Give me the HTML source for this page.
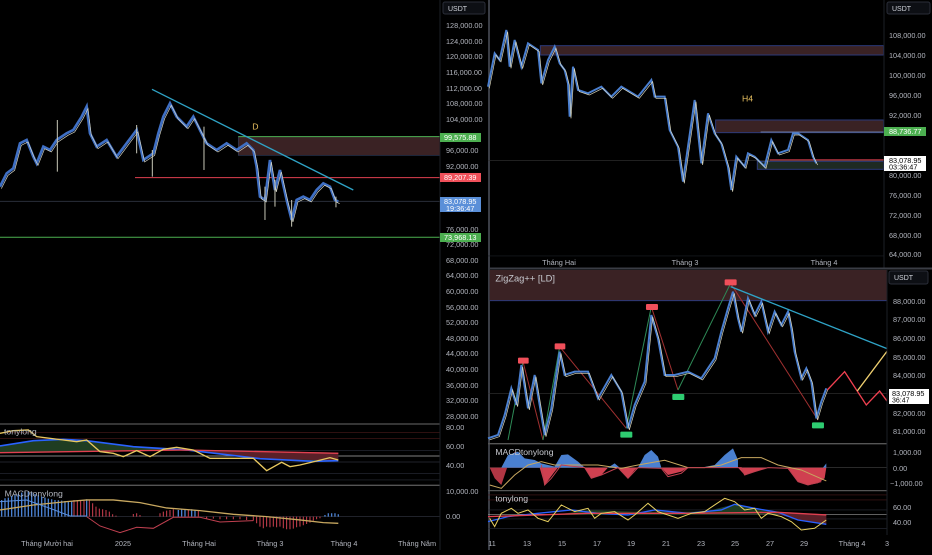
<!DOCTYPE html>
<html><head><meta charset="utf-8"><style>
html,body{margin:0;padding:0;background:#000;}
body{width:932px;height:550px;overflow:hidden;font-family:"Liberation Sans",sans-serif;}
svg text{font-family:"Liberation Sans",sans-serif;}
</style></head><body>
<svg width="932" height="550" viewBox="0 0 932 550" xmlns="http://www.w3.org/2000/svg">
<rect width="932" height="550" fill="#000"/>
<!-- ===== LEFT PANEL ===== -->
<g transform="scale(0.3333)">
 <rect x="715" y="410" width="605" height="56" fill="#3a2224" stroke="#2c3a5a" stroke-width="2"/>
 <line x1="715" y1="410" x2="1320" y2="410" stroke="#4caf50" stroke-width="3"/>
 <line x1="405" y1="533" x2="1320" y2="533" stroke="#e04050" stroke-width="3"/>
 <line x1="0" y1="604" x2="1320" y2="604" stroke="#2a2e39" stroke-width="3"/>
 <line x1="0" y1="712" x2="1320" y2="712" stroke="#4caf50" stroke-width="3"/>
 <line x1="456" y1="268" x2="1060" y2="570" stroke="#2fa3c6" stroke-width="4"/>
 <polyline fill="none" stroke="#3f6fc4" stroke-width="8" points="0,560 20,520 40,505 60,430 80,420 100,470 110,490 130,440 150,450 170,420 200,400 220,390 245,350 260,320 270,400 290,440 320,420 350,470 380,430 410,390 430,480 460,460 475,400 490,350 510,310 530,350 560,380 580,350 600,390 620,430 650,450 680,430 710,450 740,430 760,450 770,500 780,590 795,600 810,480 825,570 840,510 860,600 875,660 890,600 910,590 930,600 950,570 970,550 990,560 1005,600 1015,605"/>
 <polyline fill="none" stroke="#d8d8c8" stroke-width="2" transform="translate(4,6)" points="0,560 20,520 40,505 60,430 80,420 100,470 110,490 130,440 150,450 170,420 200,400 220,390 245,350 260,320 270,400 290,440 320,420 350,470 380,430 410,390 430,480 460,460 475,400 490,350 510,310 530,350 560,380 580,350 600,390 620,430 650,450 680,430 710,450 740,430 760,450 770,500 780,590 795,600 810,480 825,570 840,510 860,600 875,660 890,600 910,590 930,600 950,570 970,550 990,560 1005,600 1015,605"/>
 <g stroke="#c8c8b8" stroke-width="3">
  <line x1="172" y1="360" x2="172" y2="515"/><line x1="410" y1="375" x2="410" y2="460"/><line x1="457" y1="450" x2="457" y2="530"/><line x1="612" y1="380" x2="612" y2="510"/><line x1="795" y1="560" x2="795" y2="660"/><line x1="825" y1="540" x2="825" y2="620"/><line x1="875" y1="600" x2="875" y2="680"/><line x1="1008" y1="590" x2="1008" y2="622"/>
 </g>
 <text x="757" y="388" fill="#e8c060" font-size="26">D</text>
</g>
<g transform="translate(0,270) scale(0.3333)">
 <line x1="0" y1="462" x2="1465" y2="462" stroke="#555" stroke-width="4"/>
 <line x1="0" y1="646" x2="1465" y2="646" stroke="#555" stroke-width="4"/>
 <g stroke="#2a2e39" stroke-width="2"><line x1="0" y1="541" x2="1320" y2="541"/><line x1="0" y1="576" x2="1320" y2="576"/><line x1="0" y1="610" x2="1320" y2="610"/><line x1="0" y1="630" x2="1320" y2="630"/><line x1="0" y1="740" x2="1320" y2="740"/></g>
 <line x1="0" y1="488" x2="1320" y2="488" stroke="#4a1a1a" stroke-width="2"/>
 <line x1="0" y1="506" x2="1320" y2="506" stroke="#4a1a1a" stroke-width="2"/>
 <line x1="0" y1="558" x2="1320" y2="558" stroke="#aaa" stroke-width="2"/>
 <path d="M0,528 L100,512 L190,508 L260,512 L400,530 L560,540 L780,566 L940,574 L1015,572 L1015,548 L560,540 L0,548Z" fill="#1f3d22"/>
 <path d="M560,540 L1015,548 L1015,572 L780,566Z" fill="#5a2028"/>
 <polyline fill="none" stroke="#2962ff" stroke-width="5" points="0,528 100,512 190,508 260,512 400,530 560,540 780,566 940,574 1015,572"/>
 <polyline fill="none" stroke="#e04050" stroke-width="4" points="0,548 560,540 1015,550"/>
 <polyline fill="none" stroke="#e8c860" stroke-width="4" points="0,490 40,482 85,480 110,500 190,510 230,515 260,510 300,545 340,550 370,560 410,542 450,560 490,538 530,532 580,540 630,565 700,565 760,565 800,602 845,577 870,590 900,585 950,573 990,563 1015,570"/>
 <text x="12" y="494" fill="#b2b5be" font-size="26">tonylong</text>
 <g stroke="#4a80d0" stroke-width="4">
  <path d="M5,740V690M15,740V685M25,740V683M35,740V678M45,740V675M55,740V672M65,740V668M75,740V665M85,740V665M95,740V668M105,740V672M115,740V676M125,740V680M135,740V683M145,740V686M155,740V688M165,740V690M175,740V691M185,740V692M195,740V693M205,740V694M215,740V694M260,740V688"/>
  <path d="M535,740V720M545,740V718M555,740V720M575,740V718M585,740V720M975,740V735M985,740V730M995,740V730M1005,740V730M1015,740V733"/>
 </g>
 <g stroke="#d04050" stroke-width="3">
  <path d="M222,740V690M232,740V690M242,740V690M252,740V690M268,740V690M278,740V700M288,740V710M298,740V716M308,740V718M318,740V720M328,740V725M338,740V733M348,740V737M400,740V732M410,740V730M420,740V735M480,740V730M490,740V725M500,740V722M510,740V720M520,740V718M565,740V720M595,740V720M610,740V740M620,740V746M640,740V746M660,740V748M680,740V748M700,740V748M720,740V748M740,740V750M760,740V752M770,740V760M780,740V770M790,740V775M800,740V770M810,740V772M820,740V770M830,740V772M840,740V770M850,740V775M860,740V778M870,740V778M880,740V776M890,740V772M900,740V770M910,740V766M920,740V762M930,740V758M940,740V752M950,740V748M960,740V745"/>
 </g>
 <polyline fill="none" stroke="#c8a860" stroke-width="4" points="0,720 100,705 200,695 260,690 340,690 420,698 500,714 600,722 700,733 800,740 900,750 970,758 1015,760"/>
 <polyline fill="none" stroke="#5a90e0" stroke-width="3" points="0,695 80,690 150,715 210,738 260,738"/>
 <polyline fill="none" stroke="#c04050" stroke-width="3" points="260,740 300,768 360,788 410,772 460,775 520,742 600,742 660,756 760,752"/>
 <text x="14" y="680" fill="#b2b5be" font-size="26">MACDtonylong</text>
</g>
<rect x="440" y="0" width="49" height="550" fill="#000"/>
<line x1="440" y1="0" x2="440" y2="550" stroke="#1c1f26" stroke-width="1"/>
<rect x="443" y="2" width="42" height="12" rx="2" fill="#0d0f14" stroke="#2a2e39"/>
<text x="448" y="11" fill="#d1d4dc" font-size="7">USDT</text>
<g fill="#b2b5be" font-size="7.3">
<text x="446" y="28">128,000.00</text><text x="446" y="44">124,000.00</text><text x="446" y="59">120,000.00</text><text x="446" y="75">116,000.00</text><text x="446" y="91">112,000.00</text><text x="446" y="106">108,000.00</text><text x="446" y="122">104,000.00</text><text x="446" y="153">96,000.00</text><text x="446" y="169">92,000.00</text><text x="446" y="232">76,000.00</text><text x="446" y="247">72,000.00</text><text x="446" y="263">68,000.00</text><text x="446" y="278">64,000.00</text><text x="446" y="294">60,000.00</text><text x="446" y="310">56,000.00</text><text x="446" y="325">52,000.00</text><text x="446" y="341">48,000.00</text><text x="446" y="356">44,000.00</text><text x="446" y="372">40,000.00</text><text x="446" y="388">36,000.00</text><text x="446" y="403">32,000.00</text><text x="446" y="419">28,000.00</text>
<text x="446" y="430">80.00</text><text x="446" y="449">60.00</text><text x="446" y="468">40.00</text><text x="446" y="494">10,000.00</text><text x="446" y="519">0.00</text>
</g>
<rect x="440" y="133" width="41" height="9" fill="#4caf50"/><text x="444" y="140" fill="#fff" font-size="7.3">99,575.88</text>
<rect x="440" y="173" width="41" height="9" fill="#f0505a"/><text x="444" y="180" fill="#fff" font-size="7.3">89,207.39</text>
<rect x="440" y="197" width="41" height="15" fill="#5a8fd8"/><text x="444" y="204" fill="#fff" font-size="7.3">83,078.95</text><text x="446" y="211" fill="#fff" font-size="7.3">19:36:47</text>
<rect x="440" y="233" width="41" height="9" fill="#4caf50"/><text x="444" y="240" fill="#fff" font-size="7.3">73,968.13</text>
<g fill="#b2b5be" font-size="7.3" text-anchor="middle">
<text x="47" y="546">Tháng Mười hai</text><text x="123" y="546">2025</text><text x="199" y="546">Tháng Hai</text><text x="270" y="546">Tháng 3</text><text x="344" y="546">Tháng 4</text><text x="417" y="546">Tháng Năm</text>
</g>
<line x1="489" y1="0" x2="489" y2="550" stroke="#3a3d45" stroke-width="2"/>

<!-- ===== RIGHT TOP ===== -->
<g transform="translate(488,0) scale(0.3333)">
 <rect x="157" y="137" width="1030" height="28" fill="#3a2224" stroke="#2c3a7a" stroke-width="3"/>
 <rect x="683" y="360" width="504" height="38" fill="#3a2224" stroke="#2c3a7a" stroke-width="3"/>
 <line x1="818" y1="396" x2="1187" y2="396" stroke="#6a7aa0" stroke-width="3"/>
 <rect x="808" y="484" width="379" height="24" fill="#1e2a22" stroke="#2c3a7a" stroke-width="3"/>
 <line x1="845" y1="480" x2="1187" y2="480" stroke="#e04050" stroke-width="4"/>
 <line x1="0" y1="482" x2="1187" y2="482" stroke="#333" stroke-width="2"/>
 <polyline fill="none" stroke="#4a7fd0" stroke-width="6" points="0,260 20,160 35,180 55,90 65,200 80,120 100,200 120,130 150,150 160,250 180,180 200,140 215,190 230,210 240,250 245,350 255,200 270,270 300,280 340,260 370,290 400,260 450,290 490,240 500,290 530,290 545,390 570,440 585,545 600,440 620,300 640,490 660,340 680,400 700,430 720,500 730,570 745,470 770,500 780,460 800,470 830,500 850,420 870,460 900,450 915,400 930,400 960,420 975,470 985,490"/>
 <polyline fill="none" stroke="#e0dcc0" stroke-width="2" transform="translate(4,5)" points="0,260 20,160 35,180 55,90 65,200 80,120 100,200 120,130 150,150 160,250 180,180 200,140 215,190 230,210 240,250 245,350 255,200 270,270 300,280 340,260 370,290 400,260 450,290 490,240 500,290 530,290 545,390 570,440 585,545 600,440 620,300 640,490 660,340 680,400 700,430 720,500 730,570 745,470 770,500 780,460 800,470 830,500 850,420 870,460 900,450 915,400 930,400 960,420 975,470 985,490"/>
 <text x="762" y="304" fill="#e8c060" font-size="26">H4</text>
 <line x1="0" y1="768" x2="1187" y2="768" stroke="#1c1f26" stroke-width="2"/>
</g>
<rect x="884" y="0" width="48" height="268" fill="#000"/>
<line x1="884" y1="0" x2="884" y2="268" stroke="#1c1f26"/>
<rect x="887" y="2" width="43" height="12" rx="2" fill="#0d0f14" stroke="#2a2e39"/>
<text x="892" y="11" fill="#d1d4dc" font-size="7">USDT</text>
<g fill="#b2b5be" font-size="7.3">
<text x="889" y="38">108,000.00</text><text x="889" y="58">104,000.00</text><text x="889" y="78">100,000.00</text><text x="889" y="98">96,000.00</text><text x="889" y="118">92,000.00</text><text x="889" y="178">80,000.00</text><text x="889" y="198">76,000.00</text><text x="889" y="218">72,000.00</text><text x="889" y="238">68,000.00</text><text x="889" y="257">64,000.00</text>
</g>
<rect x="884" y="127" width="42" height="9" fill="#4caf50"/><text x="889" y="134" fill="#fff" font-size="7.3">88,736.77</text>
<rect x="884" y="156" width="42" height="15" fill="#fff"/><text x="889" y="163" fill="#000" font-size="7.3">83,078.95</text><text x="889" y="169.5" fill="#000" font-size="7.3">03:36:47</text>
<g fill="#b2b5be" font-size="7.3" text-anchor="middle"><text x="559" y="265">Tháng Hai</text><text x="685" y="265">Tháng 3</text><text x="824" y="265">Tháng 4</text></g>
<line x1="489" y1="268.5" x2="932" y2="268.5" stroke="#3a3d45" stroke-width="2"/>

<!-- ===== RIGHT BOTTOM ===== -->
<g transform="translate(488,265) scale(0.3333)">
 <rect x="5" y="15" width="1192" height="92" fill="#3a2224"/>
 <line x1="5" y1="107" x2="1197" y2="107" stroke="#2c3a7a" stroke-width="3"/>
 <line x1="0" y1="385" x2="1197" y2="385" stroke="#333" stroke-width="2"/>
 <g fill="none" stroke-width="3">
  <polyline stroke="#2e8b57" points="60,525 105,290"/><polyline stroke="#a03030" points="105,290 165,525"/>
  <polyline stroke="#2e8b57" points="165,525 215,245"/><polyline stroke="#a03030" points="215,245 415,490"/>
  <polyline stroke="#2e8b57" points="415,490 490,125"/><polyline stroke="#a03030" points="490,125 570,375"/>
  <polyline stroke="#2e8b57" points="570,375 728,55"/><polyline stroke="#a03030" points="728,55 990,465"/>
 </g>
 <polyline fill="none" stroke="#4a7fd0" stroke-width="6" points="0,520 30,510 50,450 70,370 85,420 100,300 120,430 140,330 155,420 170,510 190,430 215,260 230,330 260,320 300,320 330,400 370,330 400,380 420,490 440,420 470,350 490,150 510,220 530,330 560,330 600,320 640,340 680,280 700,200 720,130 735,80 750,160 760,200 780,100 800,150 820,110 840,200 860,140 880,180 900,140 910,190 920,260 940,340 955,310 970,350 985,460 1000,410 1015,370"/>
 <polyline fill="none" stroke="#e0dcc0" stroke-width="2" transform="translate(4,5)" points="0,520 30,510 50,450 70,370 85,420 100,300 120,430 140,330 155,420 170,510 190,430 215,260 230,330 260,320 300,320 330,400 370,330 400,380 420,490 440,420 470,350 490,150 510,220 530,330 560,330 600,320 640,340 680,280 700,200 720,130 735,80 750,160 760,200 780,100 800,150 820,110 840,200 860,140 880,180 900,140 910,190 920,260 940,340 955,310 970,350 985,460 1000,410 1015,370"/>
 <line x1="728" y1="65" x2="1200" y2="252" stroke="#2fa3c6" stroke-width="4"/>
 <polyline fill="none" stroke="#f04050" stroke-width="4" points="1018,375 1070,320 1135,420 1175,378 1200,412"/>
 <polyline fill="none" stroke="#f0d070" stroke-width="4" points="1108,378 1200,255"/>
 <g fill="#f04f5a"><rect x="90" y="278" width="32" height="18" rx="3"/><rect x="200" y="235" width="32" height="18" rx="3"/><rect x="474" y="117" width="36" height="18" rx="3"/><rect x="710" y="43" width="36" height="18" rx="3"/></g>
 <g fill="#2ecc71"><rect x="397" y="500" width="36" height="18" rx="3"/><rect x="553" y="387" width="36" height="18" rx="3"/><rect x="972" y="472" width="36" height="18" rx="3"/></g>
 <text x="22" y="50" fill="#c8cad0" font-size="28">ZigZag++ [LD]</text>
 <line x1="0" y1="536" x2="1332" y2="536" stroke="#555" stroke-width="4"/>
 <line x1="0" y1="677" x2="1332" y2="677" stroke="#555" stroke-width="4"/>
 <line x1="0" y1="608" x2="1200" y2="608" stroke="#444" stroke-width="2"/>
 <path d="M5,608 L20,640 L40,660 L60,600 L80,560 L100,590 L130,585 L155,600 L160,608 Z" fill="#d04050" opacity="0.85"/>
 <path d="M40,608 L60,570 L90,560 L110,580 L140,585 L160,595 L200,605 L220,570 L240,568 L270,590 L290,608 Z" fill="#4a80d0"/>
 <path d="M155,608 L170,660 L200,620 L210,608 Z M290,608 L310,640 L340,630 L360,608Z M390,608 L420,640 L440,615 L450,608 Z M520,608 L540,630 L580,620 L600,608 Z M750,608 L770,630 L800,620 L840,608 Z M900,608 L930,650 L960,660 L990,655 L1010,640 L1015,608 Z" fill="#d04050"/>
 <path d="M360,608 L380,595 L395,608 Z M450,608 L470,570 L490,555 L510,575 L520,608 Z M640,608 L680,600 L710,570 L735,550 L750,585 L750,608 Z M1005,608 L1015,595 L1015,608 Z" fill="#4a80d0"/>
 <polyline fill="none" stroke="#c8a860" stroke-width="3" points="5,660 40,670 80,630 120,600 160,590 200,600 260,600 330,600 400,610 450,600 530,586 600,608 650,608 700,600 760,578 820,578 870,600 940,615 1015,648"/>
 <polyline fill="none" stroke="#c04050" stroke-width="3" points="160,600 170,660 190,640 220,600 290,608 310,640 340,630 390,608 420,640 450,608 520,610 540,635 580,625 600,608 760,608 770,630 800,620 840,608 900,610 930,650 960,660 1000,650"/>
 <text x="22" y="570" fill="#c8cad0" font-size="26">MACDtonylong</text>
 <g stroke="#2a2e39" stroke-width="2"><line x1="0" y1="735" x2="1200" y2="735"/><line x1="0" y1="762" x2="1200" y2="762"/><line x1="0" y1="790" x2="1200" y2="790"/></g>
 <line x1="0" y1="690" x2="1200" y2="690" stroke="#4a1a1a" stroke-width="2"/><line x1="0" y1="705" x2="1200" y2="705" stroke="#4a1a1a" stroke-width="2"/>
 <line x1="0" y1="748" x2="1200" y2="748" stroke="#999" stroke-width="2"/>
 <path d="M200,750 L300,735 L450,740 L650,740 L740,718 L800,730 L870,742 L870,748 L200,750Z" fill="#1f3d22"/>
 <path d="M870,742 L1015,748 L1015,778 L930,765 L870,748Z" fill="#5a2028"/>
 <polyline fill="none" stroke="#2962ff" stroke-width="4" points="0,770 60,755 150,745 250,735 330,745 420,750 500,735 600,745 700,735 740,718 800,730 870,742 930,765 1015,778"/>
 <polyline fill="none" stroke="#e04050" stroke-width="4" points="0,755 300,745 600,745 870,742 1015,750"/>
 <polyline fill="none" stroke="#e8d060" stroke-width="3" points="5,760 20,785 40,745 70,730 90,745 120,735 150,760 180,770 220,720 260,740 300,730 320,760 340,745 380,740 420,765 440,750 480,715 510,740 540,750 570,760 610,745 650,740 680,720 710,700 740,710 770,735 800,730 820,760 840,745 880,755 910,770 940,795 980,790 1015,765"/>
 <text x="22" y="710" fill="#c8cad0" font-size="26">tonylong</text>
</g>
<rect x="887" y="270" width="45" height="280" fill="#000"/>
<line x1="887" y1="270" x2="887" y2="535" stroke="#1c1f26"/>
<rect x="889" y="271" width="39" height="13" rx="2" fill="#0d0f14" stroke="#2a2e39"/>
<text x="894" y="280" fill="#d1d4dc" font-size="7">USDT</text>
<g fill="#b2b5be" font-size="7.3">
<text x="893" y="304">88,000.00</text><text x="893" y="322">87,000.00</text><text x="893" y="341">86,000.00</text><text x="893" y="360">85,000.00</text><text x="893" y="378">84,000.00</text><text x="893" y="416">82,000.00</text><text x="893" y="434">81,000.00</text>
<text x="893" y="455">1,000.00</text><text x="893" y="471">0.00</text><text x="890" y="486">−1,000.00</text>
<text x="893" y="510">60.00</text><text x="893" y="525">40.00</text>
</g>
<rect x="889" y="389" width="40" height="15" fill="#fff"/><text x="892" y="396" fill="#000" font-size="7.3">83,078.95</text><text x="892" y="402.5" fill="#000" font-size="7">36:47</text>
<g fill="#b2b5be" font-size="7.3" text-anchor="middle">
<text x="492" y="546">11</text><text x="527" y="546">13</text><text x="562" y="546">15</text><text x="597" y="546">17</text><text x="631" y="546">19</text><text x="666" y="546">21</text><text x="701" y="546">23</text><text x="735" y="546">25</text><text x="770" y="546">27</text><text x="804" y="546">29</text><text x="852" y="546">Tháng 4</text><text x="887" y="546">3</text>
</g>
</svg>
</body></html>
